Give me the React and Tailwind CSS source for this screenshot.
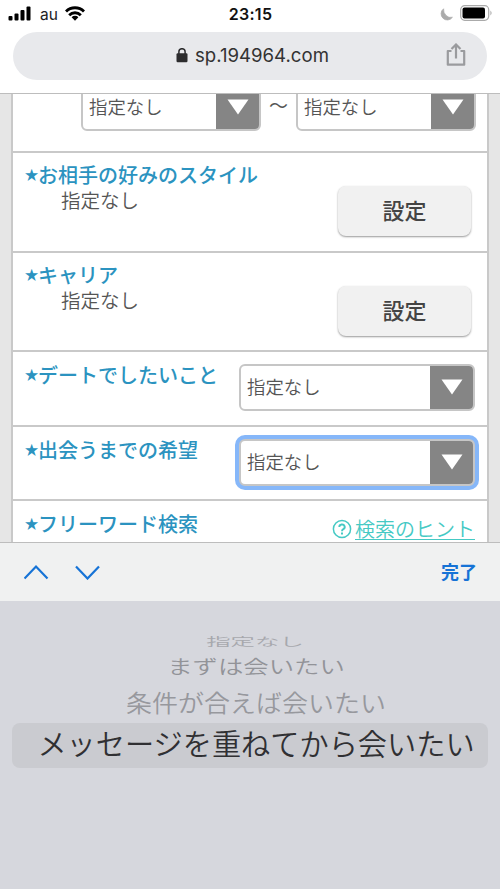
import React from 'react';

const Arrow = () => (
    <div className="w-[43px] bg-[#858585] flex items-center justify-center pb-px">
        <svg width="22" height="16" viewBox="0 0 22 16">
            <path d="M0.5 0.5h21L11 15.5z" fill="#fff" />
        </svg>
    </div>
);

const Select = ({ className = '' }) => (
    <div className={`flex h-[47px] shrink-0 overflow-hidden rounded-md border-2 border-[#c6c6c6] bg-white ${className}`}>
        <div className="flex-1 pl-[6px] text-[18.4px] leading-[42px] font-[350] text-[#555]">指定なし</div>
        <Arrow />
    </div>
);

const Label = ({ children }) => (
    <div className="flex items-center whitespace-nowrap text-[20px] leading-6 font-medium text-[#2b93c0]">
        <span className="w-[13px] text-[15px] flex justify-center">★</span>
        {children}
    </div>
);

const SettingRow = ({ label, className = '' }) => (
    <div className={`flex justify-between border-b-2 border-[#c9c9c9] pl-3 pr-4 ${className}`}>
        <div className="pt-[11px]">
            <Label>{label}</Label>
            <div className="pl-9 text-[19.5px] leading-[26px] font-[350] text-[#555]">指定なし</div>
        </div>
        <button className="mt-[33px] h-[50px] w-[133px] rounded-lg bg-[#f1f1f1] text-[22px] font-medium text-[#444] shadow-[0_1px_2px_#999]">
            設定
        </button>
    </div>
);

const StatusBar = () => (
    <div className="flex h-8 items-center pl-2 pr-[7px]">
        <div className="flex flex-1 items-center pb-[5px]">
            <svg width="23" height="15" viewBox="0 0 23 15" fill="#000">
                <rect x="0.5" y="10" width="4" height="4.5" rx="1" />
                <rect x="6.5" y="7.5" width="4" height="7" rx="1" />
                <rect x="12.5" y="4" width="4" height="10.5" rx="1" />
                <rect x="18.5" y="0.5" width="4" height="14" rx="1" />
            </svg>
            <span className="ml-[9px] mt-[3px] w-[18px] text-[15.5px] leading-4 text-[#222]">au</span>
            <svg className="ml-[7px]" width="20" height="15" viewBox="0 0 20 15" fill="none" stroke="#000" strokeWidth="2.9">
                <path d="M1 5.5a12.7 12.7 0 0 1 18 0" />
                <path d="M4.2 9.2a8.2 8.2 0 0 1 11.6 0" />
                <path d="M10 14.8l-3.4-3.6a4.8 4.8 0 0 1 6.8 0z" fill="#000" stroke="none" />
            </svg>
        </div>
        <span className="pb-1 text-[16px] leading-5 font-semibold tracking-[0.3px] text-[#111]">23:15</span>
        <div className="flex flex-1 items-center justify-end pb-[6px]">
            <svg className="mt-[3px]" width="13" height="13" viewBox="0 0 13 13">
                <path d="M3.6 0.8A6.2 6.2 0 1 0 12.4 9.3Q8.8 10.3 6 7.5Q3 4.4 3.6 0.8z" fill="#aaa" stroke="#aaa" strokeWidth="0.8" />
            </svg>
            <svg className="ml-[7px]" width="33" height="16" viewBox="0 0 33 16">
                <rect x="0.7" y="0.7" width="28" height="14.6" rx="4" fill="none" stroke="#aaa" strokeWidth="1.2" />
                <rect x="2.5" y="2.6" width="22.5" height="10.8" rx="2" fill="#000" />
                <path d="M30.5 5.5q2 2.5 0 5z" fill="#999" />
            </svg>
        </div>
    </div>
);

const AddressBar = () => (
    <div className="mx-[13px] flex h-12 items-center rounded-full bg-[#e8e9ec] pr-[21px] text-[#333]">
        <div className="flex flex-1 items-center pl-[163px]">
            <svg width="12" height="15" viewBox="0 0 12 15">
                <rect x="0.5" y="5.2" width="11" height="9" rx="1.2" fill="#2c2c2e" />
                <path d="M2.9 6V3.8a3.1 3.1 0 0 1 6.2 0V6" fill="none" stroke="#2c2c2e" strokeWidth="1.5" />
            </svg>
            <span className="ml-[7px] pb-px text-[18.6px]">sp.194964.com</span>
        </div>
        <svg width="20" height="26" viewBox="0 0 20 26" fill="none" stroke="#9a9b9e" strokeWidth="2.2">
            <path d="M5.5 8H1.8v13.7h16.4V8H14.5" strokeLinejoin="round" />
            <path d="M10 15.5V2M5.5 6L10 1.5L14.5 6" />
        </svg>
    </div>
);

const SearchForm = () => (
    <div className="h-[450px] overflow-hidden border-y border-[#bdbdbd] bg-[#e6e6e6] px-[11px]">
        <div className="h-full border-x-2 border-[#c9c9c9] bg-white">
            <div className="flex h-[59px] items-start border-b-2 border-[#c9c9c9] pl-[68px]">
                <Select className="-mt-[10px] w-[180px]" />
                <span className="mt-px w-[35px] text-center text-[19px] leading-6 text-[#555]">〜</span>
                <Select className="-mt-[10px] w-[180px]" />
            </div>
            <SettingRow label="お相手の好みのスタイル" className="h-[100px]" />
            <SettingRow label="キャリア" className="h-[99px]" />
            <div className="flex h-[75px] items-start justify-between border-b-2 border-[#c9c9c9] pl-3 pr-3 pt-3">
                <Label>デートでしたいこと</Label>
                <Select className="w-[236px]" />
            </div>
            <div className="flex h-[74px] items-start justify-between border-b-2 border-[#c9c9c9] pl-3 pr-3 pt-3">
                <Label>出会うまでの希望</Label>
                <Select className="w-[236px] ring-4 ring-[#86b7f9]" />
            </div>
            <div className="flex items-start justify-between pl-3 pr-3 pt-3">
                <Label>フリーワード検索</Label>
                <div className="flex items-center pt-[4px] text-[#45c9c4]">
                    <svg width="20" height="20" viewBox="0 0 20 20" fill="none" stroke="currentColor" strokeWidth="1.5">
                        <circle cx="10" cy="10" r="8.6" />
                        <path d="M7.3 8a2.7 2.5 0 1 1 4 2.2q-1.3.7-1.3 2" strokeWidth="1.9" />
                        <path d="M10 13.5v2" strokeWidth="2" />
                    </svg>
                    <span className="ml-[3px] h-[23px] border-b border-[#45c9c4] text-[20px] leading-[26px] font-[350]">検索のヒント</span>
                </div>
            </div>
        </div>
    </div>
);

const Toolbar = () => (
    <div className="flex h-[58px] items-center justify-between bg-[#f0f1f1] pl-6 pr-[23px] text-[#1673d6]">
        <svg width="76" height="16" viewBox="0 0 76 16" fill="none" stroke="currentColor" strokeWidth="2.2">
            <path d="M0.5 14.5L12 2.5l11.5 12" />
            <path d="M52 2.5l11.5 12L75 2.5" />
        </svg>
        <span className="text-[18px] font-bold">完了</span>
    </div>
);

const Picker = () => (
    <div className="flex h-[288px] flex-col items-center bg-[#d6d7dd] pt-[34px] font-[350] whitespace-nowrap">
        <div className="h-[14px] scale-y-[0.46] pl-[10px] text-[24.4px] leading-[14px] text-[#a7a8ad]">指定なし</div>
        <div className="mt-[8px] h-5 scale-y-[0.74] pl-[12px] text-[25.4px] leading-5 text-[#929398]">まずは会いたい</div>
        <div className="mt-[11px] h-8 scale-y-[0.92] pl-[12px] text-[26px] leading-8 text-[#97989d]">条件が合えば会いたい</div>
        <div className="mt-[3px] h-[45px] w-[476px] rounded-lg bg-[#cacbd0] pl-[12px] text-center text-[29.2px] leading-[44px] text-[#303033]">
            メッセージを重ねてから会いたい
        </div>
    </div>
);

export default function App() {
    return (
        <div className="h-[889px] w-[500px] overflow-hidden bg-white font-['Inter','Noto_Sans_CJK_JP',sans-serif]">
            <StatusBar />
            <AddressBar />
            <div className="h-[13px]" />
            <SearchForm />
            <Toolbar />
            <Picker />
        </div>
    );
}
